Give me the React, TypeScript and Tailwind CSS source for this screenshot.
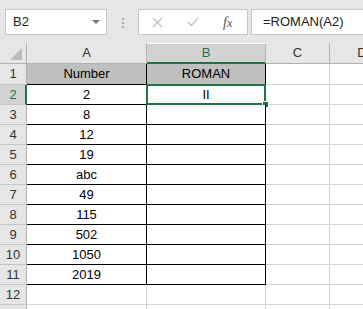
import React from "react";

const font = { fontFamily: '"Liberation Sans", Arial, sans-serif' };

const rowsA = ["Number", "2", "8", "12", "19", "abc", "49", "115", "502", "1050", "2019", ""];
const rowsB = ["ROMAN", "II", "", "", "", "", "", "", "", "", "", ""];

function Toolbar() {
  return (
    <div className="flex h-[43px] items-start bg-[#e6e6e6] pt-[9px]">
      <div className="ml-[5px] flex h-[26px] w-[102px] items-center border border-[#c6c6c6] bg-white pl-[7px] pr-[6px] text-[13px] text-[#222]">
        <span className="flex-1">B2</span>
        <svg width="8" height="5" viewBox="0 0 8 5">
          <path d="M0 0 L8 0 L4 4 Z" fill="#777" />
        </svg>
      </div>
      <div className="ml-[15px] flex h-[26px] flex-col justify-center gap-[2px] pt-[1px]">
        <div className="h-[2px] w-[2px] bg-[#a8a8a8]" />
        <div className="h-[2px] w-[2px] bg-[#a8a8a8]" />
        <div className="h-[2px] w-[2px] bg-[#a8a8a8]" />
      </div>
      <div className="ml-[14px] flex h-[26px] w-[110px] items-center border border-[#c6c6c6] bg-white">
        <svg className="ml-[13px]" width="11" height="11" viewBox="0 0 11 11">
          <path d="M1 1 L10 10 M10 1 L1 10" stroke="#c8c8c8" strokeWidth="1.6" />
        </svg>
        <svg className="ml-[24px]" width="12" height="10" viewBox="0 0 12 10">
          <path d="M1 5 L4.5 8.5 L11 1" stroke="#c8c8c8" strokeWidth="1.6" fill="none" />
        </svg>
        <span
          className="ml-[24px] text-[14px] italic text-[#555]"
          style={{ fontFamily: '"Liberation Serif", "Times New Roman", serif' }}
        >
          f<span className="text-[12px]">x</span>
        </span>
      </div>
      <div className="ml-[3px] flex h-[26px] flex-1 items-center border border-r-0 border-[#c6c6c6] bg-white pl-[11px] text-[13px] text-[#222]">
        =ROMAN(A2)
      </div>
    </div>
  );
}

function HeaderRow() {
  return (
    <div className="flex h-[21px] text-[13px]">
      <div className="relative w-[27px] shrink-0 border-r border-b border-[#b1b1b1] bg-[#e6e6e6]">
        <svg className="absolute right-[4px] bottom-[3px]" width="12" height="12" viewBox="0 0 12 12">
          <path d="M12 0 L12 12 L0 12 Z" fill="#bcbcbc" />
        </svg>
      </div>
      <div className="flex w-[120px] shrink-0 items-center justify-center border-r border-b border-[#b1b1b1] bg-[#e6e6e6] text-[#333]">
        A
      </div>
      <div className="mt-[1px] flex w-[119px] shrink-0 items-center justify-center border-r border-b-2 border-r-[#b1b1b1] border-b-[#217346] bg-[#d2d2d2] text-[#217346]">
        B
      </div>
      <div className="flex w-[64px] shrink-0 items-center justify-center border-r border-b border-[#b1b1b1] bg-[#e6e6e6] text-[#333]">
        C
      </div>
      <div className="flex w-[64px] shrink-0 items-center justify-center border-b border-[#b1b1b1] bg-[#e6e6e6] text-[#333]">
        D
      </div>
    </div>
  );
}

function Row({ i }: { i: number }) {
  const n = i + 1;
  const inTable = n <= 11;
  const isHead = n === 1;
  const selected = n === 2;
  const h = isHead ? "h-[21px]" : "h-[20px]";
  const tableCell = inTable
    ? isHead
      ? "border-r border-b border-black bg-[#bfbfbf]"
      : "border-r border-b border-black bg-white"
    : "border-r border-b border-[#d4d4d4] bg-white";
  return (
    <div className={`flex ${h} text-[13px] text-black`}>
      <div
        className={
          selected
            ? "flex w-[27px] shrink-0 items-center justify-center border-b border-r-2 border-b-[#c6c6c6] border-r-[#217346] bg-[#d2d2d2] pl-[1px] text-[#217346]"
            : "flex w-[27px] shrink-0 items-center justify-center border-r border-b border-r-[#b1b1b1] border-b-[#c6c6c6] bg-[#e6e6e6] text-[#333]"
        }
      >
        {n <= 12 ? n : ""}
      </div>
      <div className={`flex w-[120px] shrink-0 items-center justify-center ${tableCell}`}>{rowsA[i] ?? ""}</div>
      <div className={`relative flex w-[119px] shrink-0 items-center justify-center ${tableCell}`}>
        {rowsB[i] ?? ""}
        {selected && (
          <>
            <div className="pointer-events-none absolute -top-[1px] -left-[1px] -right-[1px] -bottom-[1px] border-2 border-[#217346]" />
            <div className="absolute -right-[4px] -bottom-[4px] h-[7px] w-[7px] border border-white bg-[#217346]" />
          </>
        )}
      </div>
      <div className="w-[64px] shrink-0 border-r border-b border-[#d4d4d4] bg-white" />
      <div className="w-[64px] shrink-0 border-b border-[#d4d4d4] bg-white" />
    </div>
  );
}

export default function App() {
  return (
    <div className="h-[309px] w-[363px] overflow-hidden bg-white" style={font}>
      <Toolbar />
      <HeaderRow />
      {Array.from({ length: 13 }, (_, i) => (
        <Row key={i} i={i} />
      ))}
    </div>
  );
}
